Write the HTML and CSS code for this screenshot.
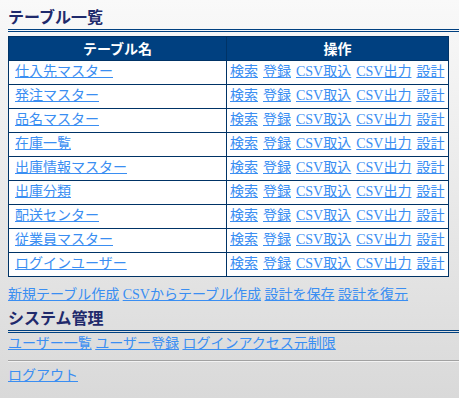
FILE: index.html
```html
<!DOCTYPE html>
<html lang="ja">
<head>
<meta charset="utf-8">
<title>テーブル一覧</title>
<link rel="stylesheet" href="styles.css">
</head>
<body>
<h2 class="section-title">テーブル一覧</h2>
<table class="table-list">
  <thead>
    <tr><th class="col-name">テーブル名</th><th class="col-ops">操作</th></tr>
  </thead>
  <tbody>
    <tr><td class="name"><a href="#">仕入先マスター</a></td><td class="ops"><a href="#">検索</a> <a href="#">登録</a> <a href="#">CSV取込</a> <a href="#">CSV出力</a> <a href="#">設計</a></td></tr>
    <tr><td class="name"><a href="#">発注マスター</a></td><td class="ops"><a href="#">検索</a> <a href="#">登録</a> <a href="#">CSV取込</a> <a href="#">CSV出力</a> <a href="#">設計</a></td></tr>
    <tr><td class="name"><a href="#">品名マスター</a></td><td class="ops"><a href="#">検索</a> <a href="#">登録</a> <a href="#">CSV取込</a> <a href="#">CSV出力</a> <a href="#">設計</a></td></tr>
    <tr><td class="name"><a href="#">在庫一覧</a></td><td class="ops"><a href="#">検索</a> <a href="#">登録</a> <a href="#">CSV取込</a> <a href="#">CSV出力</a> <a href="#">設計</a></td></tr>
    <tr><td class="name"><a href="#">出庫情報マスター</a></td><td class="ops"><a href="#">検索</a> <a href="#">登録</a> <a href="#">CSV取込</a> <a href="#">CSV出力</a> <a href="#">設計</a></td></tr>
    <tr><td class="name"><a href="#">出庫分類</a></td><td class="ops"><a href="#">検索</a> <a href="#">登録</a> <a href="#">CSV取込</a> <a href="#">CSV出力</a> <a href="#">設計</a></td></tr>
    <tr><td class="name"><a href="#">配送センター</a></td><td class="ops"><a href="#">検索</a> <a href="#">登録</a> <a href="#">CSV取込</a> <a href="#">CSV出力</a> <a href="#">設計</a></td></tr>
    <tr><td class="name"><a href="#">従業員マスター</a></td><td class="ops"><a href="#">検索</a> <a href="#">登録</a> <a href="#">CSV取込</a> <a href="#">CSV出力</a> <a href="#">設計</a></td></tr>
    <tr><td class="name"><a href="#">ログインユーザー</a></td><td class="ops"><a href="#">検索</a> <a href="#">登録</a> <a href="#">CSV取込</a> <a href="#">CSV出力</a> <a href="#">設計</a></td></tr>
  </tbody>
</table>
<div class="links links-table"><a href="#">新規テーブル作成</a> <a href="#">CSVからテーブル作成</a> <a href="#">設計を保存</a> <a href="#">設計を復元</a></div>
<h2 class="section-title section-sys">システム管理</h2>
<div class="links links-sys"><a href="#">ユーザー一覧</a> <a href="#">ユーザー登録</a> <a href="#">ログインアクセス元制限</a></div>
<hr class="divider">
<div class="links links-logout"><a href="#">ログアウト</a></div>
</body>
</html>
```
FILE: styles.css
```css
html {
  background: #e0e0e0;
}
body {
  margin: 0;
  padding: 5px 0 0 8px;
  min-height: 398px;
  box-sizing: border-box;
  font-family: "Liberation Serif", "Noto Sans CJK JP", serif;
  font-size: 14px;
  line-height: 20px;
  background: linear-gradient(to bottom, #f9f9f9 0%, #d9d9d9 100%);
}
a {
  color: #3a8ef2;
  text-decoration: underline;
}
.section-title {
  margin: 0;
  padding-bottom: 1px;
  font-family: "Noto Sans CJK JP", sans-serif;
  font-size: 16px;
  line-height: 23px;
  font-weight: bold;
  color: #1f2a6c;
  border-bottom: 3px double #004080;
}
.table-list {
  margin-top: 4px;
  width: 441px;
  border-collapse: collapse;
  border: 1px solid #003366;
  background: #ffffff;
}
.table-list th,
.table-list td {
  border: 1px solid #003366;
  padding: 1px 3px 2px;
  line-height: 20px;
  white-space: nowrap;
}
.table-list th {
  background: #004080;
  color: #ffffff;
  font-family: "Noto Sans CJK JP", sans-serif;
  font-weight: bold;
  text-align: center;
}
.table-list .col-ops {
  width: 215px;
}
.table-list td.name {
  padding-left: 6px;
}
.table-list td.ops {
  word-spacing: 1.5px;
}
.links-table {
  margin-top: 8px;
}
.section-sys {
  margin-top: 1px;
}
.links-sys {
  margin-top: 1px;
}
.divider {
  margin: 6px 0 0 0;
  height: 0;
  border: 0;
  border-top: 1px solid #a2a2a2;
  border-bottom: 1px solid #f2f2f2;
}
.links-logout {
  margin-top: 4px;
}
```
